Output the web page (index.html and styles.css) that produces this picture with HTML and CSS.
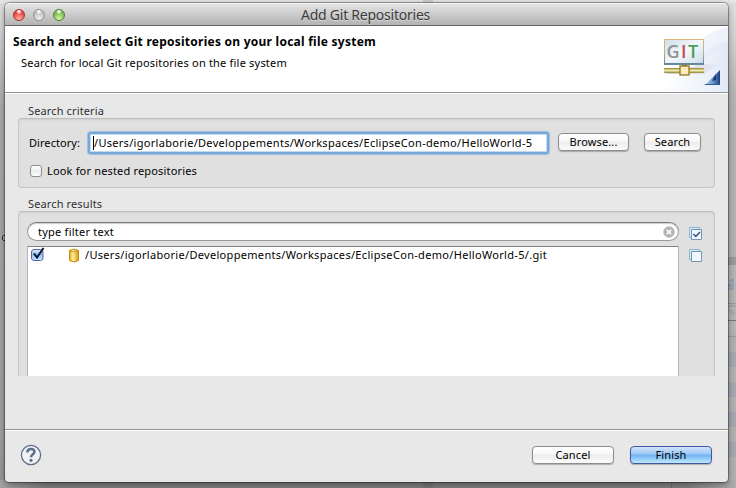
FILE: index.html
```html
<!DOCTYPE html>
<html lang="en">
<head>
<meta charset="utf-8">
<title>Add Git Repositories</title>
<link rel="stylesheet" href="styles.css">
</head>
<body>
<div class="desktop">
  <svg class="backdrop" width="736" height="488" viewBox="0 0 736 488">
    <defs>
      <linearGradient id="bl" x2="0" y2="1"><stop offset="0" stop-color="#e4e4e4"/><stop offset=".22" stop-color="#ababab"/><stop offset=".9" stop-color="#a0a0a0"/><stop offset="1" stop-color="#969696"/></linearGradient>
      <linearGradient id="br" x2="0" y2="1"><stop offset="0" stop-color="#e2e2e2"/><stop offset=".2" stop-color="#b4b4b4"/><stop offset="1" stop-color="#b0b0b0"/></linearGradient>
      <linearGradient id="bt" x2="0" y2="1"><stop offset="0" stop-color="#e9e9e9"/><stop offset="1" stop-color="#dadada"/></linearGradient>
      <linearGradient id="bb"><stop offset="0" stop-color="#a4a4a4"/><stop offset=".06" stop-color="#7e7e7e"/><stop offset=".93" stop-color="#7e7e7e"/><stop offset="1" stop-color="#acacac"/></linearGradient>
    </defs>
    <rect width="736" height="488" fill="url(#br)"/>
    <rect width="20" height="488" fill="url(#bl)"/>
    <rect width="736" height="6" fill="url(#bt)"/>
    <rect x="423" width="10" height="6" fill="#cbcbcb"/>
    <path d="M728 257h8v8h-8z" fill="#999"/>
    <path d="M728 265h8v66h-8z" fill="#b5b5b5"/>
    <path d="M728 303.500h8M728 336.500h8" stroke="#999"/>
    <path d="M728 320.500h8" stroke="#777"/>
    <path d="M729 281h3v-2h1v10h-5m1-2h2v-3h-2z" fill="none" stroke="#8191b5"/>
    <path d="M729 306h7M731 310l4 4m-6-4 4 5" fill="none" stroke="#999"/>
    <path d="M728 352h8v15h-8zM728 382h8v15h-8zM728 412h8v15h-8zM728 442h8v15h-8z" fill="#a5a8b1"/>
    <rect y="480" width="736" height="8" fill="url(#bb)"/>
    <path d="M671.500 482v6" stroke="#6c6c6c"/>
    <path d="M423 482h10v6h-10z" fill="#757575"/>
    <path d="M5 235.500H3.500l-1 1v3l1 1H5" fill="none" stroke="#222"/>
  </svg>
  <main class="window">
    <header class="titlebar">
      <div class="lights"><i class="light red"></i><i class="light gray"></i><i class="light green"></i></div>
      <h1 class="title">Add Git Repositories</h1>
    </header>
    <section class="banner">
      <div class="banner-text">
        <h2 class="headline">Search and select Git repositories on your local file system</h2>
        <p class="subline">Search for local Git repositories on the file system</p>
      </div>
      <svg class="banner-art" width="72" height="66" viewBox="0 0 72 66">
        <defs>
          <linearGradient id="sw" x1="0" x2="1" y1="0" y2="1"><stop offset="0" stop-color="#f5f8fd"/><stop offset="1" stop-color="#dbe4f4"/></linearGradient>
          <linearGradient id="scr" x1="0" x2="1" y2="1"><stop offset="0" stop-color="#cfdce9"/><stop offset=".5" stop-color="#f4f8fb"/><stop offset="1" stop-color="#cddce9"/></linearGradient>
          <linearGradient id="fr" x2="0" y2="1"><stop offset="0" stop-color="#dfb678"/><stop offset=".5" stop-color="#b7b5a0"/><stop offset="1" stop-color="#648798"/></linearGradient>
          <linearGradient id="tri" x2="1"><stop offset="0" stop-color="#b4d2f0"/><stop offset=".5" stop-color="#6f98cc"/><stop offset="1" stop-color="#183e80"/></linearGradient>
          <linearGradient id="shade"><stop offset="0" stop-color="#bdb5c5" stop-opacity=".9"/><stop offset="1" stop-color="#c5bdd0" stop-opacity="0"/></linearGradient>
          <linearGradient id="fade"><stop offset="0" stop-color="#edf2fb" stop-opacity="0"/><stop offset="1" stop-color="#e2e9f7"/></linearGradient>
        </defs>
        <path d="M0 66C20 66 26 28 72 15V66Z" fill="url(#fade)"/>
        <path d="M36 24C47 10 58 3 72 1V20C58 26 47 32 40 42Z" fill="url(#sw)" opacity=".75"/>
        <path d="M9 48 49 38H66L48 48Z" fill="url(#shade)"/>
        <rect x="8.500" y="13.500" width="39" height="24" fill="url(#scr)" stroke="url(#fr)"/>
        <path d="M8 38.500h40" stroke="#688b96"/>
        <g class="git"><text x="10.500" y="32" fill="#929292">G</text><text x="25" y="32" fill="#c04a4a">I</text><text x="32" y="32" fill="#45a05b">T</text></g>
        <path d="M28.500 39v3" stroke="#827520" stroke-width="5"/>
        <path d="M8 44.500h40" stroke="#a39a43" stroke-width="5"/><path d="M8 44.500h40" stroke="#f2edb0" stroke-width="2"/>
        <rect x="24" y="40" width="9" height="9" fill="#fbecc0" stroke="#94781b" stroke-width="1.300"/>
        <path d="M64 44V59H49Z" fill="url(#tri)"/><path d="M49 58.500h15" fill="none" stroke="#315b98"/><path d="M60 48v6l-4 1z" fill="#173a76"/>
      </svg>
    </section>
    <section class="content">
      <div class="group-label">Search criteria</div>
      <div class="group criteria">
        <div class="row">
          <label class="dir-label">Directory:</label>
          <div class="dir-field"><span class="path">/Users/igorlaborie/Developpements/Workspaces/EclipseCon-demo/HelloWorld-5</span></div>
          <button class="btn browse">Browse...</button>
          <button class="btn search">Search</button>
        </div>
        <label class="nested"><i class="box"></i><span>Look for nested repositories</span></label>
      </div>
      <div class="group-label results-label">Search results</div>
      <div class="group results">
        <div class="column">
          <div class="filter"><span>type filter text</span>
            <svg width="12" height="12" viewBox="0 0 12 12"><circle cx="6" cy="6" r="5.700" fill="#b4b4b4"/><path d="M3.700 3.700l4.600 4.600m0-4.600L3.700 8.300" stroke="#fff" stroke-width="1.600"/></svg>
          </div>
          <div class="list">
            <div class="item">
              <svg class="check" width="15" height="15" viewBox="0 0 15 15"><defs><linearGradient id="cb" x2="0" y2="1"><stop offset="0" stop-color="#e5effb"/><stop offset=".45" stop-color="#91bdf0"/><stop offset="1" stop-color="#cceaff"/></linearGradient></defs><rect x=".500" y="2.500" width="11.500" height="11" rx="2.500" fill="url(#cb)" stroke="#5267a4"/><path d="M3 6.500l3 4L12.500 1" fill="none" stroke="#0b1830" stroke-width="2"/></svg>
              <svg class="repo" width="10" height="15" viewBox="0 0 10 15"><defs><linearGradient id="cy"><stop offset="0" stop-color="#e9a913"/><stop offset=".4" stop-color="#fff2a0"/><stop offset="1" stop-color="#dd9608"/></linearGradient></defs><path d="M.500 2.500Q5-.500 9.500 2.500V12.500Q5 15.500.500 12.500Z" fill="url(#cy)" stroke="#c38a10"/><path d="M1 3Q5 5 9 3" fill="none" stroke="#d19b23"/></svg>
              <span class="path">/Users/igorlaborie/Developpements/Workspaces/EclipseCon-demo/HelloWorld-5/.git</span>
            </div>
          </div>
        </div>
        <div class="tools">
          <svg width="13" height="13" viewBox="0 0 13 13"><path d="M.500 10.500V.500h10v10z" fill="#d3edf7" stroke="#8fb6cf"/><path d="M2.500 2.500h10v10h-10z" fill="#f0f8ff" stroke="#7891b1"/><path d="M4.500 7l2.300 2.500L11 5" fill="none" stroke="#334d78" stroke-width="1.500"/></svg>
          <svg width="13" height="13" viewBox="0 0 13 13"><path d="M.500 10.500V.500h10v10z" fill="#d3edf7" stroke="#8fb6cf"/><path d="M2.500 2.500h10v10h-10z" fill="#f0f8ff" stroke="#7891b1"/></svg>
        </div>
      </div>
    </section>
    <footer class="footer">
      <svg class="help" width="22" height="22" viewBox="0 0 22 22"><circle cx="11" cy="11" r="9.600" fill="#f1f1f1" stroke="#5d6e8b" stroke-width="1.300"/><path d="M7.400 8.600C7.400 3.700 14.800 4 14.400 8.200C14.200 10.300 11 10.300 11 13.300" fill="none" stroke="#5c6d8e" stroke-width="2.500"/><circle cx="11" cy="16.300" r="1.600" fill="#5c6d8e"/></svg>
      <button class="btn wide cancel">Cancel</button>
      <button class="btn wide finish">Finish</button>
    </footer>
  </main>
</div>
</body>
</html>
```
FILE: styles.css
```css
* { box-sizing: border-box; }
body { margin: 0; font: 11px/16px "Noto Sans", sans-serif; color: #000; letter-spacing: .17px; }
h1, h2, p { margin: 0; }
.desktop { position: relative; width: 736px; height: 488px; overflow: hidden; padding: 3px 8px 6px 5px; }
.backdrop { position: absolute; left: 0; top: 0; }
.window { position: relative; height: 479px; display: flex; flex-direction: column; background: #e8e8e8; border-radius: 5px 5px 4px 4px; overflow: visible; box-shadow: 0 0 0 1px rgba(0,0,0,.3), 0 2px 7px rgba(0,0,0,.4); }
.titlebar { height: 23px; flex: none; display: grid; grid-template-columns: 70px 1fr 70px; align-items: center; border-radius: 5px 5px 0 0; border-top: 1px solid #f5f5f5; border-bottom: 1px solid #656565; background: linear-gradient(#e3e3e3, #b3b3b3); }
.lights { display: flex; gap: 8px; padding-left: 8px; }
.light { width: 12px; height: 12px; border-radius: 50%; border: 1px solid #777; }
.red { border-color: #a63531; background: radial-gradient(circle at 50% 15%, #fff 0 8%, transparent 28%), radial-gradient(circle at 50% 90%, #ffb3a6, #e9443f 65%); }
.gray { border-color: #929292; background: radial-gradient(circle at 50% 15%, #fff 0 8%, transparent 28%), radial-gradient(circle at 50% 90%, #f2f2f2, #bdbdbd 70%); }
.green { border-color: #4d8233; background: radial-gradient(circle at 50% 15%, #fff 0 8%, transparent 28%), radial-gradient(circle at 50% 90%, #dbf8a8, #78b952 65%); }
.title { font-size: 14px; font-weight: 400; line-height: 20px; color: #3c3c3c; text-align: center; letter-spacing: -.24px; padding: 1px 2px 0 0; text-shadow: 0 1px 0 rgba(255,255,255,.4); }
.banner { height: 68px; flex: none; display: flex; justify-content: space-between; background: #fff; border-bottom: 1px solid #fff; box-shadow: inset 0 -1px 0 #919191; }
.banner-text { padding: 8px 0 0 8px; }
.headline { font-size: 12px; font-weight: 700; line-height: 16px; letter-spacing: .247px; }
.subline { padding: 5px 0 0 8px; letter-spacing: .2px; }
.git { font: 600 18px "Open Sans", sans-serif; letter-spacing: 0; }
.content { flex: 1; padding: 9px 13px 0; }
.group-label { height: 15px; padding-left: 10px; color: #303030; letter-spacing: .13px; }
.group { background: #e0e0e0; border: 1px solid #c8c8c8; border-top-color: #bcbcbc; border-radius: 4px; box-shadow: inset 0 1px 2px rgba(0,0,0,.08); }
.criteria { height: 70px; padding: 12px 12px 0 10px; }
.row { display: flex; align-items: center; height: 24px; }
.dir-label { width: 59px; letter-spacing: .06px; }
.dir-field { width: 461px; height: 22px; margin-right: 9px; padding: 2px 0 0 5px; background: #fff; border: 2px solid #77a8d9; border-radius: 3px; box-shadow: 0 0 1px 1px #9bbde0, inset 0 0 0 1px #c4daf0; }
.path { display: block; white-space: nowrap; letter-spacing: .304px; }
.dir-field .path { line-height: 14px; letter-spacing: .295px; border-left: 1px solid #000; margin-left: -2px; }
.btn { height: 18px; padding: 0; font: inherit; letter-spacing: .13px; line-height: 14px; color: #000; border: 1px solid #8d8d8d; border-radius: 4px; background: linear-gradient(#fff, #f7f7f7 45%, #ececec 50%, #fbfbfb); box-shadow: 0 1px 1px rgba(0,0,0,.25); }
.browse { width: 71px; margin: 0 15px 2px 0; }
.search { width: 57px; margin-bottom: 2px; }
.nested { display: flex; align-items: center; gap: 5px; margin: 8px 0 0 1px; }
.box { width: 12px; height: 12px; border: 1px solid #8c8c8c; border-radius: 3px; background: linear-gradient(#fff, #ededed 50%, #fcfcfc); }
.results-label { margin-top: 8px; }
.results { height: 165px; display: flex; gap: 10px; padding: 10px 0 0 8px; border-bottom: 0; border-radius: 4px 4px 0 0; }
.column { width: 652px; display: flex; flex-direction: column; gap: 5px; }
.filter { height: 19px; display: flex; justify-content: space-between; align-items: center; padding: 0 3px 0 10px; border: 1px solid #999; border-top-color: #7d7d7d; border-radius: 10px; background: #fff; letter-spacing: .24px; box-shadow: inset 0 1px 1px rgba(0,0,0,.2); }
.list { flex: 1; background: #fff; border: 1px solid #b5b5b5; border-top-color: #828282; border-bottom: 0; }
.item { display: flex; align-items: center; padding-left: 3px; height: 16px; }
.item .path { letter-spacing: .315px; }
.check { margin-bottom: 2px; }
.repo { margin: 1px 6px 0 23px; }
.tools { display: flex; flex-direction: column; gap: 9px; padding-top: 5px; }
.footer { height: 53px; flex: none; display: flex; align-items: center; padding: 0 16px 2px 15px; border-top: 1px solid #929292; box-shadow: inset 0 1px 0 #fff; border-radius: 0 0 4px 4px; }
.help { margin-right: auto; }
.wide { width: 82px; }
.cancel { margin-right: 16px; }
.finish { border-color: #42559e; background: linear-gradient(#d0e5fb, #9bc7f5 45%, #6fb2f2 50%, #bdeaff); }
```
